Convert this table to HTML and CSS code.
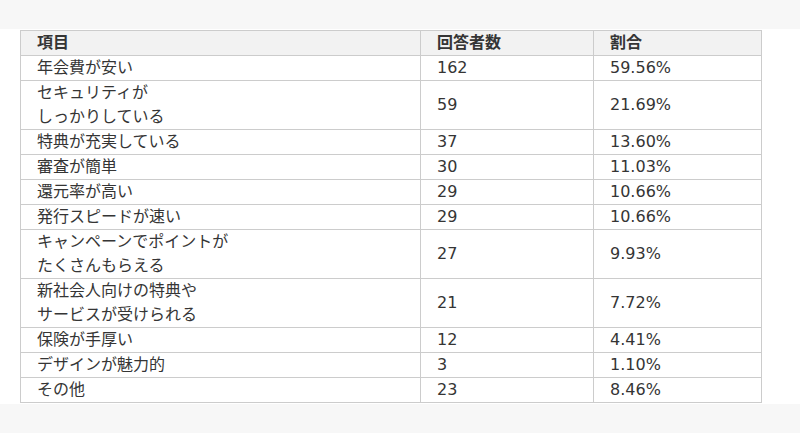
FILE: index.html
```html
<!DOCTYPE html>
<html lang="ja">
<head>
<meta charset="utf-8">
<link rel="stylesheet" href="styles.css">
</head>
<body>
<div class="page">
  <section class="content">
    <table class="survey">
      <colgroup>
        <col class="c-item">
        <col class="c-count">
        <col class="c-rate">
      </colgroup>
      <thead>
        <tr><th>項目</th><th>回答者数</th><th>割合</th></tr>
      </thead>
      <tbody>
        <tr><td>年会費が安い</td><td>162</td><td>59.56%</td></tr>
        <tr><td>セキュリティが<br>しっかりしている</td><td>59</td><td>21.69%</td></tr>
        <tr><td>特典が充実している</td><td>37</td><td>13.60%</td></tr>
        <tr><td>審査が簡単</td><td>30</td><td>11.03%</td></tr>
        <tr><td>還元率が高い</td><td>29</td><td>10.66%</td></tr>
        <tr><td>発行スピードが速い</td><td>29</td><td>10.66%</td></tr>
        <tr><td>キャンペーンでポイントが<br>たくさんもらえる</td><td>27</td><td>9.93%</td></tr>
        <tr><td>新社会人向けの特典や<br>サービスが受けられる</td><td>21</td><td>7.72%</td></tr>
        <tr><td>保険が手厚い</td><td>12</td><td>4.41%</td></tr>
        <tr><td>デザインが魅力的</td><td>3</td><td>1.10%</td></tr>
        <tr><td>その他</td><td>23</td><td>8.46%</td></tr>
      </tbody>
    </table>
  </section>
</div>
</body>
</html>
```

FILE: styles.css
```css
html, body {
  margin: 0;
  padding: 0;
}
body {
  background: #f7f7f7;
  font-family: "DejaVu Sans", "Noto Sans CJK JP", sans-serif;
  color: #353535;
}
.page {
  padding: 29px 0 30px;
}
.content {
  background: #fff;
  padding: 1px 0 1px 20px;
}
.survey {
  border-collapse: collapse;
  table-layout: fixed;
  width: 741px;
  font-size: 16px;
  line-height: 24px;
}
.c-item { width: 400px; }
.c-count { width: 173px; }
.c-rate { width: 168px; }
.survey th,
.survey td {
  border: 1px solid #cccccc;
  padding: 0 16px;
  text-align: left;
  vertical-align: middle;
}
.survey th {
  background: #f2f2f2;
  font-weight: bold;
}
```
